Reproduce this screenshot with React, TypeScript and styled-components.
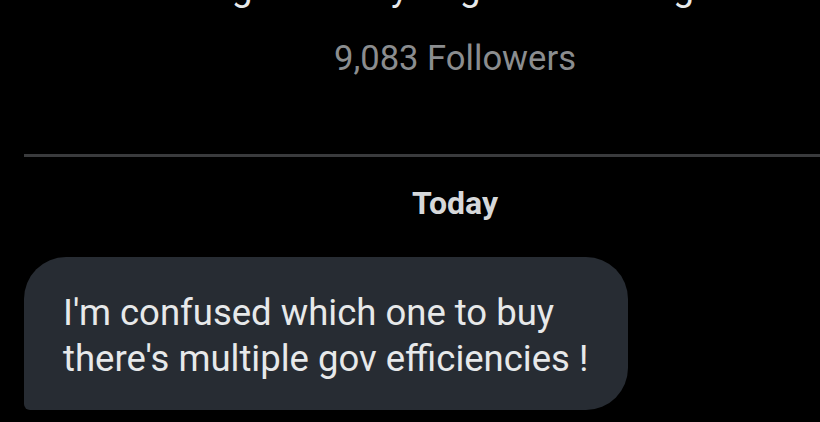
import React from 'react'
import styled, { createGlobalStyle } from 'styled-components'

const GlobalStyle = createGlobalStyle`
	html, body {
		margin: 0;
		padding: 0;
		background: #000;
		overflow: hidden;
	}
	body {
		font-family: Roboto, 'Noto Sans', sans-serif;
	}
`

export default function App() {
	return (
		<>
			<GlobalStyle />
			<Page>
				<ProfileHeader>
					<Bio>Adding each day to get closer to goal...</Bio>
					<Followers>9,083 Followers</Followers>
				</ProfileHeader>
				<Divider />
				<DayLabel>Today</DayLabel>
				<Conversation>
					<Bubble $incoming>
						I'm confused which one to buy
						<br />
						there's multiple gov efficiencies !
					</Bubble>
				</Conversation>
			</Page>
		</>
	)
}

const Page = styled.div`
	width: 820px;
	height: 422px;
	display: flex;
	flex-direction: column;
	background: #000;
	overflow: hidden;
`

const ProfileHeader = styled.div`
	display: flex;
	flex-direction: column;
	align-items: center;
	padding-left: 90px;
`

const Bio = styled.div`
	margin-top: -34px;
	font-size: 37px;
	line-height: 44px;
	color: #e7e9ea;
	white-space: nowrap;
`

const Followers = styled.div`
	margin-top: 28px;
	font-size: 34.6px;
	line-height: 40px;
	color: #8b8d8f;
`

const Divider = styled.div`
	margin: 76px 0 0 24px;
	height: 3px;
	background: #3a3b3d;
`

const DayLabel = styled.div`
	margin-top: 27px;
	padding-left: 90px;
	text-align: center;
	font-size: 32px;
	font-weight: 700;
	line-height: 38px;
	color: #d6d8da;
`

const Conversation = styled.div`
	display: flex;
	padding: 35px 0 0 24px;
`

const Bubble = styled.div<{ $incoming?: boolean }>`
	width: 604px;
	box-sizing: border-box;
	padding: 33px 20px 28px 39px;
	background: #272c33;
	border-radius: ${(p) => (p.$incoming ? '42px 42px 42px 6px' : '42px 42px 6px 42px')};
	font-size: 36.5px;
	line-height: 46px;
	color: #e7e9ea;
`
